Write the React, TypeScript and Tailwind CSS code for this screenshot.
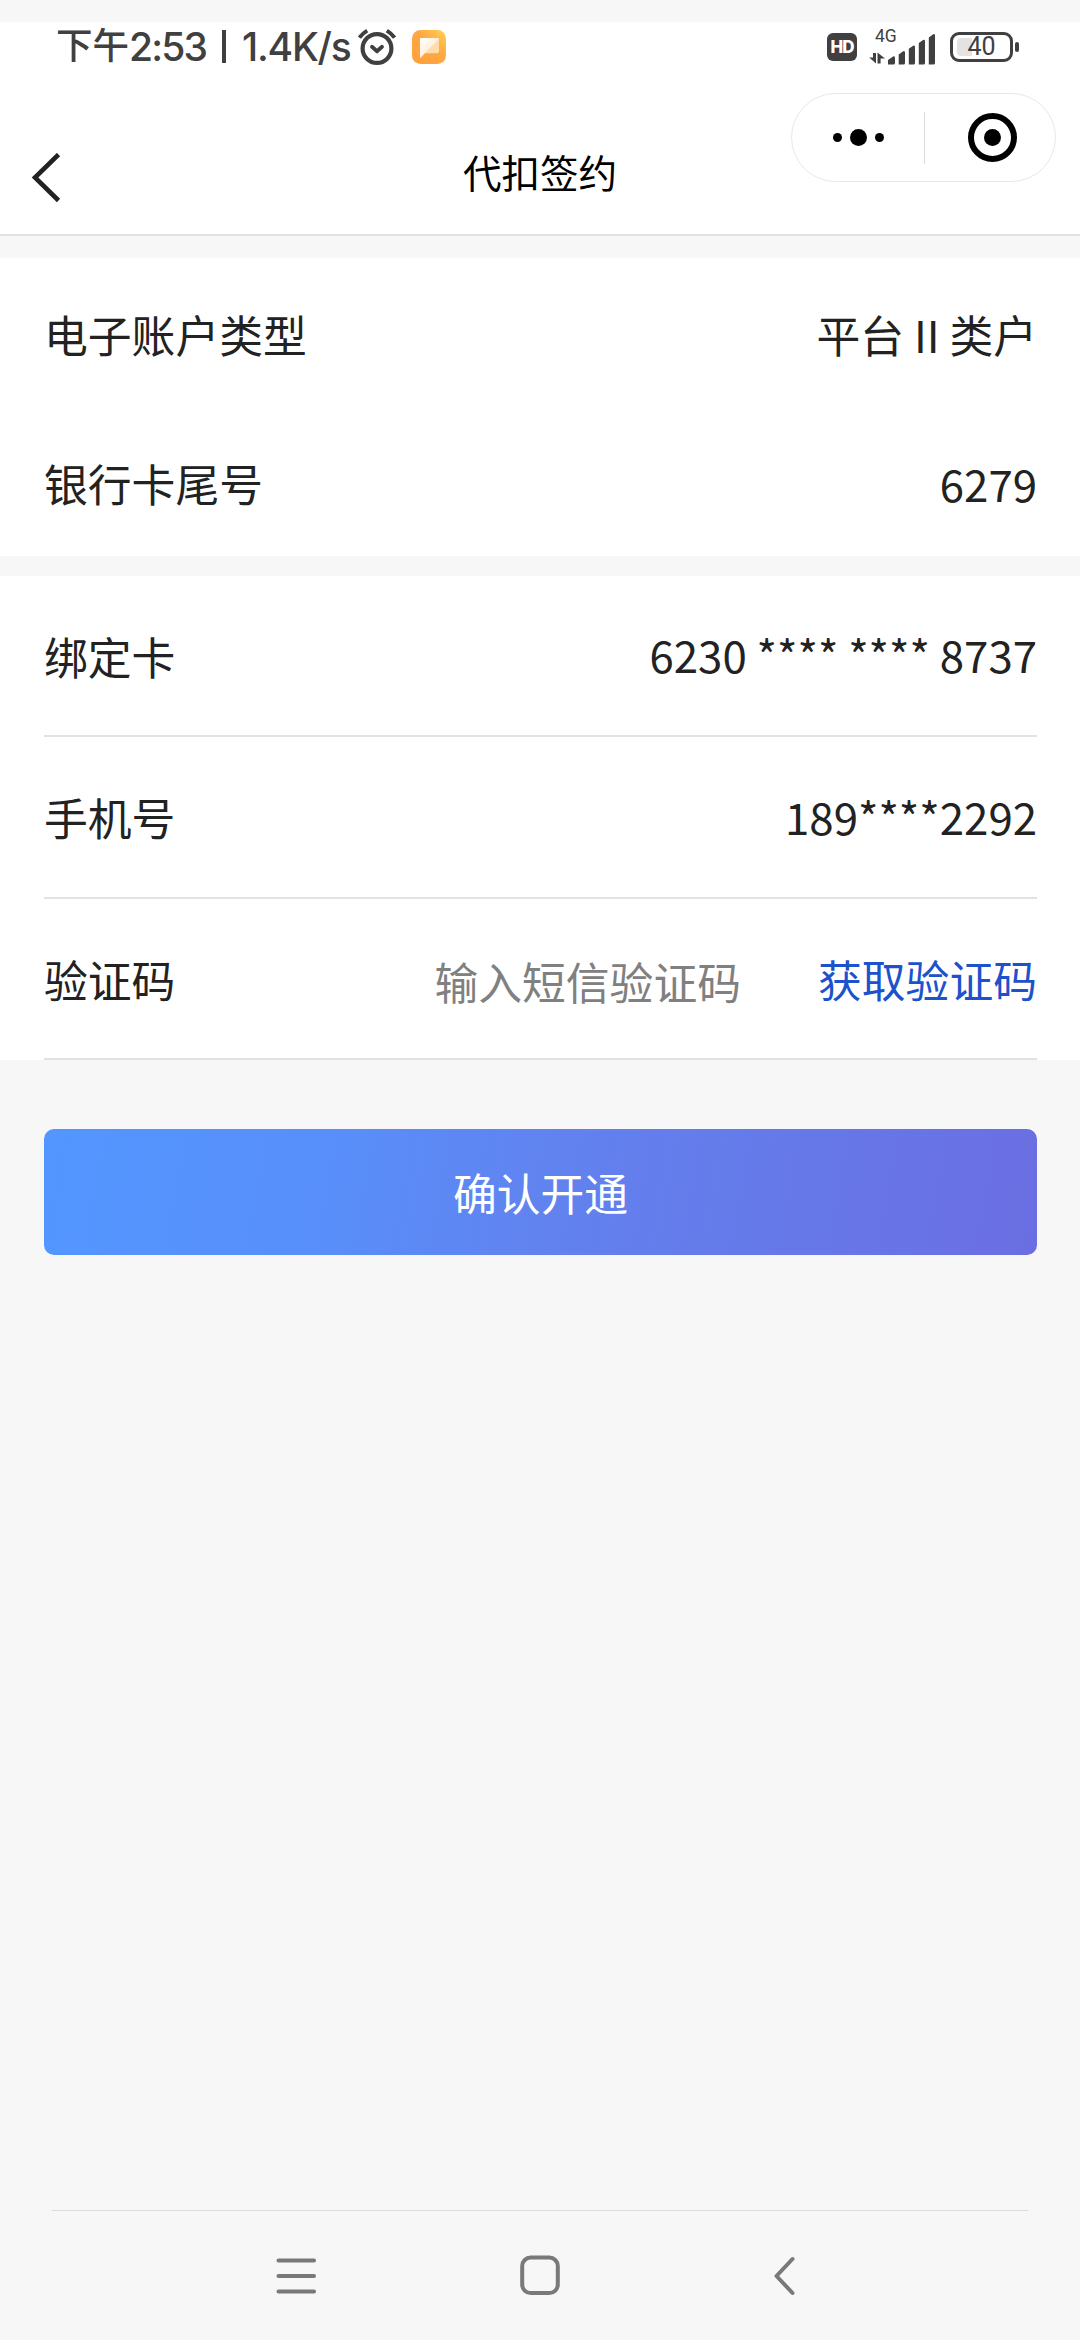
import { useState } from "react";

interface InfoRow {
  label: string;
  value: string;
}

const accountRows: InfoRow[] = [
  { label: "电子账户类型", value: "平台 II 类户" },
  { label: "银行卡尾号", value: "6279" },
];

const bindRows: InfoRow[] = [
  { label: "绑定卡", value: "6230 **** **** 8737" },
  { label: "手机号", value: "189****2292" },
];

const AlarmIcon = () => (
  <svg width="40" height="38" viewBox="0 0 40 38" fill="none" stroke="#404040" strokeLinecap="round">
    <circle cx="20" cy="20.5" r="14.4" strokeWidth="4.2" />
    <path d="M2.4 9.6 Q5.5 5.4 10.2 2.6 M37.6 9.6 Q34.5 5.4 29.8 2.6" strokeWidth="4" strokeLinecap="butt" />
    <path d="M15 18.8 L20 23.2 L25 18.8" strokeWidth="3.8" strokeLinejoin="round" />
  </svg>
);

const NoteIcon = () => (
  <svg width="34" height="34" viewBox="0 0 34 34">
    <defs>
      <linearGradient id="noteBg" x1="0" y1="1" x2="1" y2="0">
        <stop offset="0" stopColor="#ff9f3c" />
        <stop offset="0.55" stopColor="#ffa843" />
        <stop offset="1" stopColor="#ffd253" />
      </linearGradient>
      <linearGradient id="noteFold" x1="0" y1="0" x2="1" y2="1">
        <stop offset="0" stopColor="#fff" />
        <stop offset="1" stopColor="#ffe3b8" />
      </linearGradient>
    </defs>
    <rect width="34" height="34" rx="8.5" fill="url(#noteBg)" />
    <path d="M12.5 23.2 L27 8.5 V21.2 Q27 23.2 25 23.2 Z" fill="#ffdcaa" />
    <path d="M8 9 Q8 8 9 8 H26 Q27 8 27 9 L8.8 27.6 Q8 28.2 8 27.2 Z" fill="url(#noteFold)" />
  </svg>
);

const SignalIcon = () => (
  <svg width="70" height="36" viewBox="0 0 70 36" fill="#404040">
    <path d="M5 24 h3 v10.5 L1.2 28.6 h3.8 Z" />
    <path d="M9.5 34.5 V23.5 L17 29.6 H12.6 V34.5 Z" />
    <path d="M20 35.5 V31 L25.5 27.3 Q27 27.3 27 28.6 V34 Q27 35.5 25.5 35.5 Z" />
    <path d="M30.7 35.5 V25.4 L35.5 22 Q37 22 37 23.4 V34 Q37 35.5 35.5 35.5 Z" />
    <path d="M40.8 35.5 V19.8 L45.5 16.4 Q47 16.4 47 17.8 V34 Q47 35.5 45.5 35.5 Z" />
    <path d="M50.8 35.5 V14 L55.5 10.8 Q57 10.8 57 12 V34 Q57 35.5 55.5 35.5 Z" />
    <path d="M60.8 35.5 V8.4 L65.5 5 Q67 5 67 6.4 V34 Q67 35.5 65.5 35.5 Z" />
  </svg>
);

const StatusBar = () => (
  <div className="flex h-[50px] items-center bg-white pr-[61px] pl-[56px] text-[#404040]">
    <span className="-mt-[6px] w-[73px] font-['Noto_Sans_CJK_SC',sans-serif] text-[36.5px] leading-[50px] font-medium">下午</span>
    <span className="-mt-px w-[93px] font-['Inter',sans-serif] text-[39px] leading-[50px] font-[450] tracking-[-1.8px]">2:53</span>
    <span className="-mt-[2px] h-[33px] w-[4px] bg-[#404040]" />
    <span className="-mt-px ml-[16px] w-[115px] font-['Inter',sans-serif] text-[39px] leading-[50px] font-[450] tracking-[-1.2px]">1.4K/s</span>
    <div className="-mt-px">
      <AlarmIcon />
    </div>
    <div className="-mt-px ml-[15px]">
      <NoteIcon />
    </div>

    <div className="ml-auto flex items-center">
      <div className="flex h-[28px] w-[30px] items-center justify-center rounded-[6px] bg-[#404040] font-['Inter',sans-serif] text-[17px] font-extrabold tracking-[-0.9px] text-white">
        HD
      </div>
      <div className="relative ml-[11px]">
        <SignalIcon />
        <span className="absolute -top-px left-[7px] font-['Roboto',sans-serif] text-[17.5px] leading-[17px]">4G</span>
      </div>
      <div className="ml-[12px] flex items-center">
        <div className="relative flex h-[30px] w-[63px] items-center justify-center rounded-[9px] border-3 border-[#404040]">
          <div className="absolute top-[3px] left-[4px] h-[18px] w-[15px] rounded-l-[4px] bg-[#e3e3e3]" />
          <span className="relative font-['Roboto',sans-serif] text-[25px] leading-[26px]">40</span>
        </div>
        <div className="ml-[2px] h-[10px] w-[4px] rounded-[2px] bg-[#404040]" />
      </div>
    </div>
  </div>
);

const Capsule = () => (
  <div className="absolute top-[21px] right-[24px] flex h-[89px] w-[265px] items-center rounded-full border border-[#e8e8e8] bg-white">
    <button className="flex h-full w-[132px] items-center justify-center gap-[8px]" aria-label="更多">
      <span className="size-[9px] rounded-full bg-black" />
      <span className="size-[17px] rounded-full bg-black" />
      <span className="size-[9px] rounded-full bg-black" />
    </button>
    <span className="h-[52px] w-px bg-[#dcdcdc]" />
    <button className="flex h-full flex-1 items-center justify-center pl-[5px]" aria-label="关闭">
      <span className="flex size-[49px] items-center justify-center rounded-full border-6 border-black">
        <span className="size-[17px] rounded-full bg-black" />
      </span>
    </button>
  </div>
);

const Header = () => (
  <header className="relative flex h-[164px] items-center justify-center border-b-2 border-[#e2e2e2] bg-white pt-[36px]">
    <button className="absolute top-[81px] left-[30px]" aria-label="返回">
      <svg width="32" height="50" viewBox="0 0 32 50" fill="none" stroke="#222" strokeWidth="4.6">
        <path d="M28.5 1.5 L5 24.5 L28.5 47.5" />
      </svg>
    </button>
    <h1 className="text-[38.5px] leading-[56px] text-black">代扣签约</h1>
    <Capsule />
  </header>
);

const NavBar = () => (
  <nav className="mt-auto h-[130px]">
    <div className="mx-[52px] h-px bg-[#dcdcdc]" />
    <div className="flex h-[129px] items-center justify-center gap-[200px]">
      <svg width="44" height="44" viewBox="0 0 44 44" fill="none" stroke="#797979" strokeWidth="4" strokeLinecap="round">
        <path d="M4.5 6.5 H40 M4.5 22 H40 M4.5 37.5 H40" />
      </svg>
      <svg width="44" height="44" viewBox="0 0 44 44" fill="none" stroke="#797979" strokeWidth="4">
        <rect x="4.2" y="3.5" width="35.6" height="35.6" rx="8.5" />
      </svg>
      <svg width="44" height="44" viewBox="0 0 44 44" fill="none" stroke="#797979" strokeWidth="4" strokeLinecap="round" strokeLinejoin="round">
        <path d="M30.5 5 L14.5 22 L30.5 39" />
      </svg>
    </div>
  </nav>
);

export default function App() {
  const [code, setCode] = useState("");

  return (
    <div className="flex h-[2340px] w-[1080px] flex-col overflow-hidden bg-[#f7f7f7] pt-[22px] font-['Noto_Sans_CJK_SC',sans-serif] text-[43.8px] leading-[64px] text-[#222]">
      <StatusBar />
      <Header />

      <section className="mt-[22px] bg-white pr-[43px] pl-[44px]">
        {accountRows.map((row) => (
          <div key={row.label} className="flex h-[149px] items-center justify-between pt-[3px] last:pt-[2px]">
            <span>{row.label}</span>
            <span>{row.value}</span>
          </div>
        ))}
      </section>

      <section className="mt-[20px] bg-white pr-[43px] pl-[44px]">
        {bindRows.map((row) => (
          <div key={row.label} className="flex h-[162px] items-center justify-between border-b-2 border-[#e2e2e2] first:h-[161px]">
            <span>{row.label}</span>
            <span className="pb-[3px]">{row.value}</span>
          </div>
        ))}
        <div className="flex h-[161px] items-center border-b-2 border-[#e2e2e2]">
          <span>验证码</span>
          <input
            value={code}
            onChange={(e) => setCode(e.target.value)}
            placeholder="输入短信验证码"
            className="ml-auto h-[64px] w-[308px] pt-[4px] text-right outline-none placeholder:text-[#808080]"
          />
          <button className="ml-[77px] text-[#1c52cc]">获取验证码</button>
        </div>
      </section>

      <button className="mt-[69px] mr-[43px] ml-[44px] h-[126px] rounded-[10px] bg-[linear-gradient(100deg,#5396ff_0%,#588ffa_28%,#6281ee_54%,#6b6ee2_100%)] text-white">
        确认开通
      </button>

      <NavBar />
    </div>
  );
}
